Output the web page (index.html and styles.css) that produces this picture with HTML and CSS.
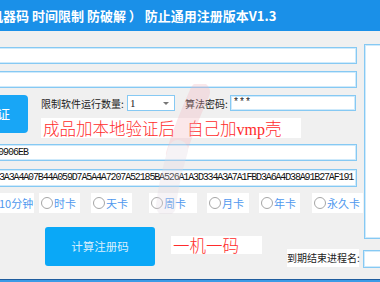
FILE: index.html
```html
<!DOCTYPE html>
<html lang="zh-CN">
<head>
    <meta charset="UTF-8">
    <title>防止通用注册版本V1.3</title>
    <link rel="stylesheet" href="styles.css">
</head>
<body>
    <div class="titlebar">机器码 时间限制 防破解 ） 防止通用注册版本V1.3</div>

    <div class="window">
        <div class="left">
            <div class="field"></div>
            <div class="field gap7"></div>

            <div class="verify-row">
                <div class="btn-verify">验证</div>
                <div class="verify-side">
                    <div class="controls">
                        <span class="label label-count">限制软件运行数量:</span>
                        <div class="select">
                            <span class="select-value">1</span>
                            <span class="select-arrow"></span>
                        </div>
                        <span class="label label-pass">算法密码:</span>
                        <div class="field field-pass">***</div>
                    </div>
                    <div class="note">成品加本地验证后<span class="note-gap"></span>自己加<span class="latin">vmp</span>壳</div>
                </div>
            </div>

            <div class="field field-code gap6">70906EB</div>
            <div class="field field-code field-long gap8">3A3A4A07B44A059D7A5A4A7207A52185BA526A1A3D334A3A7A1FBD3A6A4D38A91B27AF191</div>

            <div class="options">
                <label class="opt opt-min"><span class="dot"></span>10分钟</label>
                <label class="opt opt-hour"><span class="dot"></span>时卡</label>
                <label class="opt opt-day"><span class="dot"></span>天卡</label>
                <label class="opt opt-week"><span class="dot"></span>周卡</label>
                <label class="opt opt-month"><span class="dot"></span>月卡</label>
                <label class="opt opt-year"><span class="dot"></span>年卡</label>
                <label class="opt opt-forever"><span class="dot"></span>永久卡</label>
            </div>

            <div class="action-row">
                <div class="btn-calc">计算注册码</div>
                <div class="tag-red">一机一码</div>
                <div class="label-expire">到期结束进程名:</div>
            </div>
        </div>

        <div class="right">
            <div class="panel"></div>
            <div class="field field-proc"></div>
        </div>
    </div>

    <div class="statusbar"></div>

    <!-- faint watermark stroke over the form -->
    <svg class="watermark" width="80" height="130" viewBox="0 0 80 130">
        <path d="M50 8 C40 30, 32 50, 26 70" fill="none" stroke="#f4b4bc" stroke-width="20" stroke-linecap="round"/>
        <path d="M28 66 C22 86, 18 104, 16 122" fill="none" stroke="#e2d8e2" stroke-width="20" stroke-linecap="round"/>
    </svg>
</body>
</html>
```

FILE: styles.css
```css
body {
    position: relative;
    margin: 0;
    width: 380px;
    height: 282px;
    overflow: hidden;
    background-color: #f0f0f0;
    font-family: "Noto Sans CJK SC", "Noto Sans", sans-serif;
    color: #222;
}

.titlebar {
    height: 31px;
    line-height: 31px;
    background-color: #1a90e8;
    color: #fff;
    font-size: 13px;
    font-weight: 700;
    white-space: nowrap;
    text-indent: -10px;
}

.window {
    display: flex;
    height: 248px;
}

.left {
    margin-left: -10px;
    width: 372px;
    flex-shrink: 0;
    padding-top: 16px;
    display: flex;
    flex-direction: column;
}

.right {
    margin-left: 2px;
    flex: 1;
    padding-top: 13px;
}

.field {
    box-sizing: border-box;
    height: 17px;
    margin-right: 5px;
    background-color: #fff;
    border: 1px solid #86c9f3;
    box-shadow: inset 0 0 0 1px #cfeafb;
    white-space: nowrap;
    overflow: hidden;
}

.gap6 { margin-top: 6px; }
.gap7 { margin-top: 7px; }
.gap8 { margin-top: 8px; }

.verify-row {
    display: flex;
    margin-top: 7px;
    height: 43px;
}

.btn-verify {
    flex-shrink: 0;
    margin-left: -24px;
    width: 62px;
    height: 38px;
    border-radius: 4px;
    background-color: #18a6f6;
    color: #fff;
    font-size: 13px;
    line-height: 38px;
    text-align: center;
    white-space: nowrap;
}

.verify-side {
    margin-left: 13px;
    display: flex;
    flex-direction: column;
}

.controls {
    display: flex;
    align-items: center;
    height: 16px;
}

.label {
    font-size: 10px;
    white-space: nowrap;
}

.label-count { width: 86px; }

.label-pass {
    margin-left: 10px;
    width: 45px;
}

.select {
    box-sizing: border-box;
    position: relative;
    width: 48px;
    height: 16px;
    background-color: #fff;
    border: 1px solid #86c9f3;
    font-family: "Liberation Serif", serif;
    font-size: 11px;
    line-height: 14px;
    padding-left: 2px;
}

.select-arrow {
    position: absolute;
    right: 5px;
    top: 6px;
    border-left: 3px solid transparent;
    border-right: 3px solid transparent;
    border-top: 3px solid #777;
}

.field-pass {
    width: 126px;
    height: 16px;
    margin-right: 0;
    font-family: "Liberation Mono", monospace;
    font-size: 10px;
    line-height: 14px;
    padding-left: 2px;
}

.note {
    margin-top: 7px;
    width: 258px;
    height: 20px;
    padding-left: 2px;
    background-color: #fff;
    color: #ff2b2b;
    font-size: 16.5px;
    font-weight: 300;
    line-height: 20px;
    white-space: nowrap;
}

.note-gap {
    display: inline-block;
    width: 12px;
}

.latin {
    font-family: "Liberation Serif", serif;
    font-size: 16px;
}

.field-code {
    font-family: "Liberation Mono", monospace;
    font-size: 10px;
    letter-spacing: -1px;
    line-height: 15px;
    color: #111;
    padding-left: 2px;
}

.field-long {
    height: 18px;
    line-height: 16px;
    letter-spacing: -1.15px;
    padding-left: 8px;
}

.options {
    display: flex;
    margin-top: 6px;
    height: 20px;
}

.opt {
    box-sizing: border-box;
    display: flex;
    align-items: center;
    flex-shrink: 0;
    height: 20px;
    padding-left: 2px;
    background-color: #fff;
    color: #4f98ee;
    font-size: 11px;
    white-space: nowrap;
}

.dot {
    box-sizing: border-box;
    width: 12px;
    height: 12px;
    margin-right: 1px;
    border-radius: 50%;
    border: 1px solid #a6a6a6;
    background-color: #fff;
}

.opt-min { margin-left: -8px; width: 52px; }
.opt-min .dot { margin-right: 3px; }
.opt-hour { margin-left: 5px; width: 41px; }
.opt-day { margin-left: 11px; width: 41px; }
.opt-week { margin-left: 17px; width: 48px; }
.opt-month { margin-left: 10px; width: 42px; }
.opt-year { margin-left: 10px; width: 41px; }
.opt-forever { margin-left: 12px; width: 51px; }

.action-row {
    display: flex;
    align-items: flex-start;
    margin-top: 14px;
}

.btn-calc {
    margin-left: 55px;
    width: 110px;
    height: 39px;
    border-radius: 3px;
    background-color: #0aa8f7;
    color: #d9effd;
    font-size: 11.5px;
    line-height: 39px;
    text-align: center;
}

.tag-red {
    margin-left: 16px;
    margin-top: 9px;
    width: 89px;
    height: 18px;
    padding-left: 2px;
    background-color: #fff;
    color: #ff2b2b;
    font-size: 16.5px;
    font-weight: 300;
    line-height: 18px;
    white-space: nowrap;
}

.label-expire {
    margin-left: 25px;
    margin-top: 22px;
    width: 72px;
    height: 18px;
    background-color: #fff;
    font-size: 10px;
    line-height: 18px;
    white-space: nowrap;
}

.panel {
    box-sizing: border-box;
    height: 195px;
    width: 40px;
    background-color: #fff;
    border: 1px solid #86c9f3;
    box-shadow: inset 0 0 0 1px #cfeafb;
}

.field-proc {
    margin-top: 11px;
    margin-left: -1px;
    width: 40px;
    height: 18px;
    margin-right: 0;
}

.statusbar {
    box-sizing: border-box;
    height: 3px;
    border-top: 1px solid #1f5d9e;
    background-color: #3b9be6;
}

.watermark {
    position: absolute;
    left: 150px;
    top: 84px;
    opacity: 0.3;
    pointer-events: none;
}
```
